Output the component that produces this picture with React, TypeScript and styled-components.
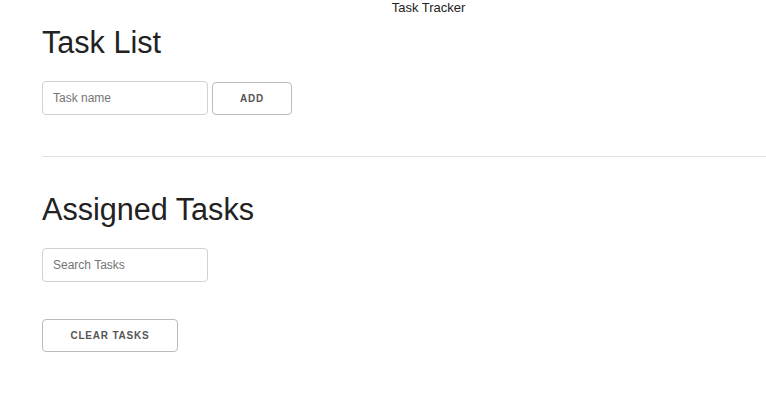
import React from "react";
import styled, { createGlobalStyle } from "styled-components";

const GlobalStyle = createGlobalStyle`
  html, body {
    margin: 0;
    padding: 0;
    background: #fff;
    overflow: hidden;
  }
  body {
    font-family: "Liberation Sans", Arial, sans-serif;
    color: #222;
  }
  * { box-sizing: border-box; }
`;

const Page = styled.div`
  width: 100vw;
  min-height: 403px;
  overflow: hidden;
`;

const Container = styled.div`
  margin-left: 42px;
  width: 773px;
`;

const AppTitle = styled.div`
  font-size: 13px;
  line-height: 15px;
  text-align: center;
  color: #222;
`;

const Heading = styled.h2<{ $top: number }>`
  margin: ${(p) => p.$top}px 0 19px;
  font-family: "Liberation Sans", Arial, sans-serif;
  font-size: 30.6px;
  font-weight: 400;
  line-height: 39px;
  color: #222;
`;

const Row = styled.div`
  display: flex;
  align-items: flex-end;
  gap: 4px;
`;

const TextInput = styled.input`
  width: 166px;
  height: 34px;
  padding: 0 10px;
  border: 1px solid #d1d1d1;
  border-radius: 4px;
  font-family: "Liberation Sans", Arial, sans-serif;
  font-size: 12px;
  color: #222;
  background: #fff;
  outline: none;
  &::placeholder {
    color: #757575;
  }
`;

const Button = styled.button<{ $width: number }>`
  width: ${(p) => p.$width}px;
  height: 33px;
  padding: 0;
  border: 1px solid #bbb;
  border-radius: 4px;
  background: transparent;
  font-family: "Liberation Sans", Arial, sans-serif;
  font-size: 10px;
  font-weight: 700;
  letter-spacing: 0.8px;
  text-transform: uppercase;
  color: #555;
  cursor: pointer;
`;

const Divider = styled.hr`
  margin: 41px 0 0;
  border: 0;
  border-top: 1px solid #e1e1e1;
`;

const ClearRow = styled.div`
  margin-top: 37px;
`;

export default function App() {
  return (
    <Page>
      <GlobalStyle />
      <Container>
        <AppTitle>Task Tracker</AppTitle>
        <Heading $top={8}>Task List</Heading>
        <Row>
          <TextInput placeholder="Task name" />
          <Button $width={80}>Add</Button>
        </Row>
        <Divider />
        <Heading $top={33}>Assigned Tasks</Heading>
        <Row>
          <TextInput placeholder="Search Tasks" />
        </Row>
        <ClearRow>
          <Button $width={136}>Clear Tasks</Button>
        </ClearRow>
      </Container>
    </Page>
  );
}
